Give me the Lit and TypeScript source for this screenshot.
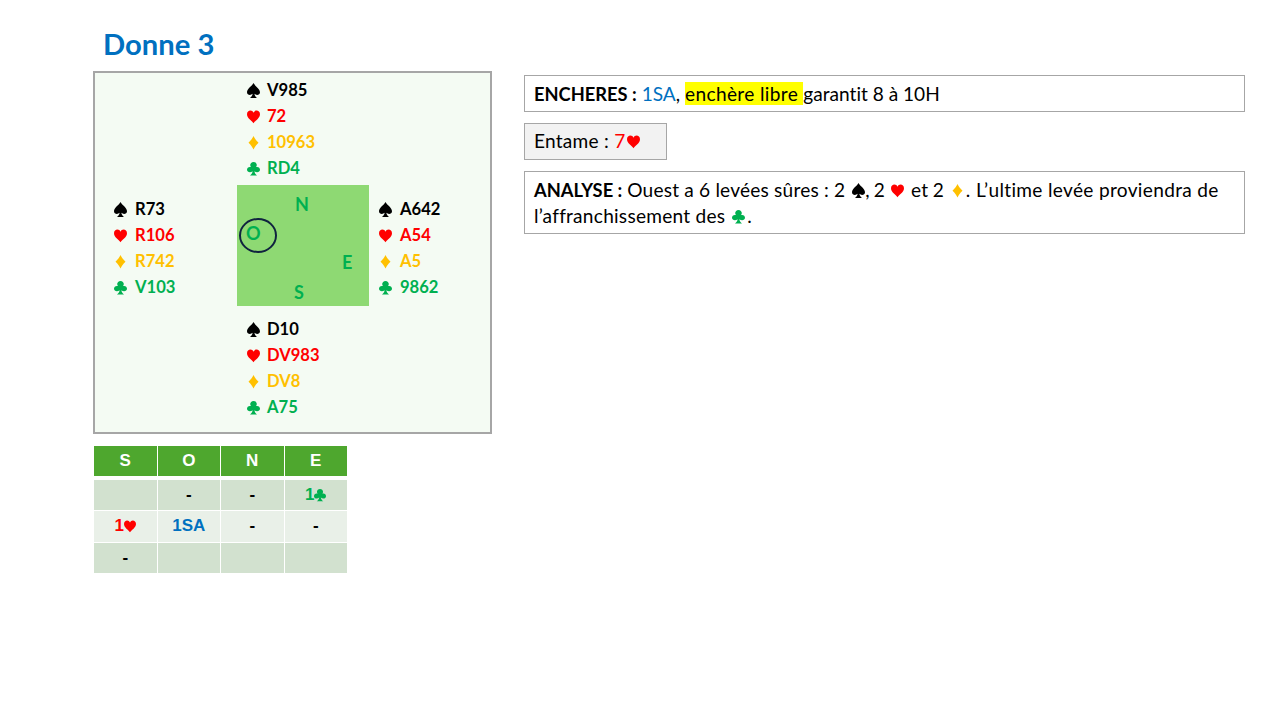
import { LitElement, html, css, svg } from "lit";
import { customElement } from "lit/decorators.js";

const PATHS: Record<string, ReturnType<typeof svg>> = {
  s: svg`<path d="M6.5 0C5.2 3 0 5.6 0 9.2C0 12 3.6 12.8 5.6 10.8C5.4 12.4 4.6 13.7 3 15H10C8.4 13.7 7.6 12.4 7.4 10.8C9.4 12.8 13 12 13 9.2C13 5.6 7.8 3 6.5 0Z"/>`,
  h: svg`<path d="M6.5 14.2C4.8 11.6 0 9.2 0 5.2C0 3 1.7 1.6 3.4 1.6C4.8 1.6 5.9 2.4 6.5 3.7C7.1 2.4 8.2 1.6 9.6 1.6C11.3 1.6 13 3 13 5.2C13 9.2 8.2 11.6 6.5 14.2Z"/>`,
  d: svg`<path d="M6.5 1C5.4 3.4 3.7 5.6 1.5 7.7C3.7 9.8 5.4 12 6.5 14.4C7.6 12 9.3 9.8 11.5 7.7C9.3 5.6 7.6 3.4 6.5 1Z"/>`,
  c: svg`<path d="M6.5 1C4.6 1 3.2 2.4 3.2 4.1C3.2 4.9 3.5 5.5 3.9 6.1C1.8 5.4 0 6.8 0 8.8C0 11.4 3.6 12.2 5.6 10.2C5.4 11.8 4.6 13.1 3 14.4H10C8.4 13.1 7.6 11.8 7.4 10.2C9.4 12.2 13 11.4 13 8.8C13 6.8 11.2 5.4 9.1 6.1C9.5 5.5 9.8 4.9 9.8 4.1C9.8 2.4 8.4 1 6.5 1Z"/>`,
};

const suit = (k: string) =>
  html`<svg class="suit ${k}" viewBox="0 0 13 15" aria-hidden="true">${PATHS[k]}</svg>`;

@customElement("app-hand")
class AppHand extends LitElement {
  static properties = { cards: { type: Array } };
  cards: string[] = [];
  static styles = css`
    :host { display: flex; flex-direction: column; gap: 0; }
    .row { display: flex; align-items: center; height: 26px; gap: var(--hand-gap, 7px); padding-left: var(--hand-inset, 1px); font: 700 16.6px "Lato", "Liberation Sans", sans-serif; }
    .suit { width: 13px; height: 15px; flex: none; fill: currentColor; }
    .s { color: #000; }
    .h { color: #ff0000; }
    .d { color: #ffc000; }
    .c { color: #00b050; }
  `;
  render() {
    const keys = ["s", "h", "d", "c"];
    return keys.map((k, i) => html`<div class="row ${k}">${suit(k)}<span>${this.cards[i]}</span></div>`);
  }
}

@customElement("app-root")
export class AppRoot extends LitElement {
  static styles = css`
    :host { display: block; width: 1280px; height: 720px; background: #fff; overflow: hidden; font-family: "Lato", "Liberation Sans", sans-serif; color: #000; font-variant-ligatures: none; }
    .page { display: flex; height: 720px; box-sizing: border-box; padding: 0 35px 0 93px; gap: 32px; }
    .left { width: 399px; flex: none; display: flex; flex-direction: column; }
    h1 { margin: 0; height: 71px; box-sizing: border-box; padding: 26px 0 0 10px; font: 700 29.2px/36px "Lato", sans-serif; color: #0070c0; }
    .board { box-sizing: border-box; width: 399px; height: 363px; border: 2px solid #a6a6a6; background: #f4fbf3;
      display: grid; grid-template-columns: 142px 132px 1fr; grid-template-rows: 112px 121px 1fr; }
    .north, .south { grid-column: 2; padding-left: 9px; }
    .north { grid-row: 1; padding-top: 4px; }
    .south { grid-row: 3; padding-top: 10px; }
    .west { grid-column: 1; grid-row: 2; padding: 11px 0 0 19px; --hand-inset: 0px; --hand-gap: 8px; }
    .east { grid-column: 3; grid-row: 2; padding: 11px 0 0 10px; --hand-inset: 0px; --hand-gap: 8px; }
    .compass { grid-column: 2; grid-row: 2; background: #8ed973; position: relative; color: #00b050; font: 700 18px/20px "Lato", sans-serif; }
    .compass span { position: absolute; }
    .n { left: 58px; top: 9px; }
    .o { left: 9px; top: 38px; }
    .e { left: 105px; top: 67px; }
    .s { left: 57px; top: 97px; }
    .ring { position: absolute; left: 2px; top: 33px; width: 38px; height: 35px; box-sizing: border-box; border: 2px solid #10233f; border-radius: 50%; }
    .bids { margin: 12px 0 0 1px; width: 253px; display: grid; grid-template-columns: repeat(4, 1fr); grid-template-rows: 33px repeat(3, 30.33px); gap: 1px; font: 700 17px "Liberation Sans", sans-serif; }
    .bids > div { display: flex; align-items: center; justify-content: center; gap: 0; }
    .head { background: #4ea72e; color: #fff; height: 30px; }
    .dark { background: #d2e1cf; }
    .light { background: #e9f0e8; }
    .bids svg { width: 12px; height: 14px; fill: currentColor; }
    .red { color: #ff0000; }
    .blue { color: #0070c0; }
    .green { color: #00b050; }
    .right { flex: 1; display: flex; flex-direction: column; align-items: flex-start; gap: 11px; padding-top: 75px; font-size: 19.1px; line-height: 26px; }
    .box { box-sizing: border-box; border: 1.5px solid #a6a6a6; padding: 5px 9px 4px; width: 100%; }
    .box.entame { width: 143px; background: #f2f2f2; padding: 4px 9px 5px; }
    .box svg { width: 13px; height: 15px; fill: currentColor; vertical-align: -1px; margin: 0 2px; }
    .box svg.flush { margin-right: 0; }
    .mark { background: #ffff00; }
    b { font-weight: 700; font-size: 18.3px; }
    .dia { color: #ffc000; }
    .wide { letter-spacing: 0.35px; }
    .tail { letter-spacing: 0.32px; }
    .mid { letter-spacing: 0.25px; }
    .slight { letter-spacing: 0.2px; }
    .tight { letter-spacing: -0.3px; }
  `;

  render() {
    return html`
      <div class="page">
        <section class="left">
          <h1>Donne 3</h1>
          <div class="board">
            <app-hand class="north" .cards=${["V985", "72", "10963", "RD4"]}></app-hand>
            <app-hand class="west" .cards=${["R73", "R106", "R742", "V103"]}></app-hand>
            <div class="compass">
              <span class="n">N</span><span class="o">O</span><span class="e">E</span><span class="s">S</span>
              <div class="ring"></div>
            </div>
            <app-hand class="east" .cards=${["A642", "A54", "A5", "9862"]}></app-hand>
            <app-hand class="south" .cards=${["D10", "DV983", "DV8", "A75"]}></app-hand>
          </div>
          <div class="bids">
            <div class="head">S</div><div class="head">O</div><div class="head">N</div><div class="head">E</div>
            <div class="dark"></div><div class="dark">-</div><div class="dark">-</div><div class="dark green">1${suit("c")}</div>
            <div class="light red">1${suit("h")}</div><div class="light blue">1SA</div><div class="light">-</div><div class="light">-</div>
            <div class="dark">-</div><div class="dark"></div><div class="dark"></div><div class="dark"></div>
          </div>
        </section>
        <section class="right">
          <div class="box"><b>ENCHERES :</b> <span class="blue">1SA</span>, <span class="mark wide">enchère libre </span>garantit 8 à 10H</div>
          <div class="box entame"><span class="mid">Entame : </span><span class="red">7${suit("h")}</span></div>
          <div class="box">
            <div><b>ANALYSE :</b> <span class="slight">Ouest a 6 levées sûres : 2</span> <svg class="flush" viewBox="0 0 13 15" aria-hidden="true">${PATHS.s}</svg><span class="tight">, 2 </span><span class="red">${suit("h")}</span> et 2 <span class="dia">${suit("d")}</span><span class="tail">. L’ultime levée proviendra de</span></div>
            <div><span class="mid">l’affranchissement des</span> <span class="green">${suit("c")}</span>.</div>
          </div>
        </section>
      </div>
    `;
  }
}
